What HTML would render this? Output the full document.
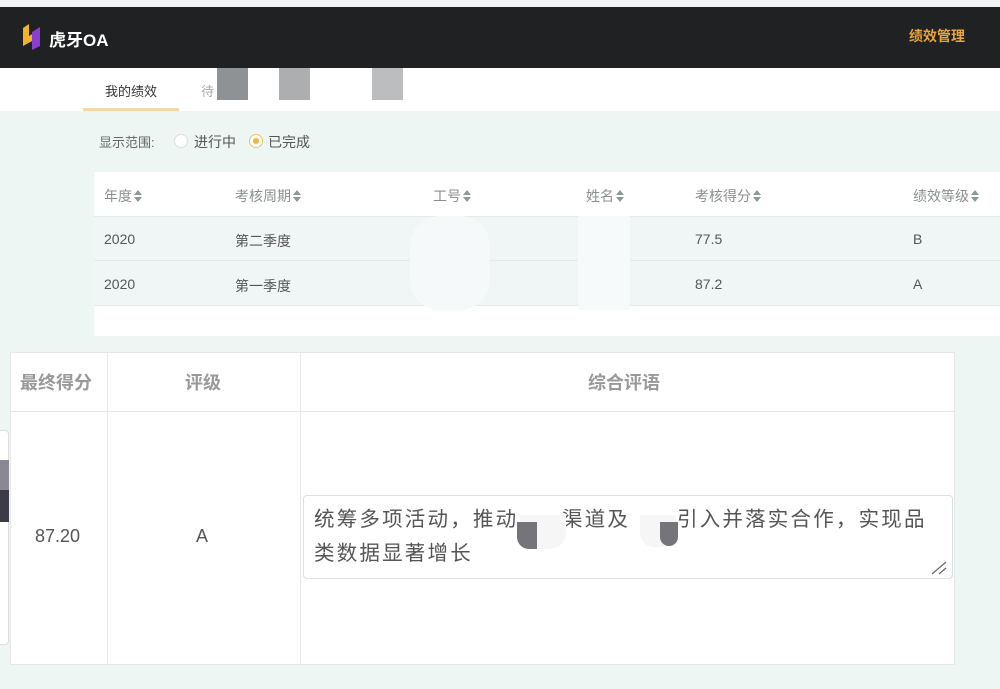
<!DOCTYPE html><html><head><meta charset="utf-8"><style>
*{margin:0;padding:0;box-sizing:border-box}
body{width:1000px;height:689px;overflow:hidden;background:#eef6f4;font-family:"Liberation Sans","Noto Sans CJK SC",sans-serif;position:relative;color:#555}
.abs{position:absolute}
.top{left:0;top:0;width:1000px;height:7px;background:#f4f4f4}
.bar{left:0;top:7px;width:1000px;height:61px;background:#1f2122}
.tabs{left:0;top:68px;width:1000px;height:43px;background:#fff}
.t{font-size:13px;white-space:nowrap}
.th{font-size:14px;color:#8a9090}
.sort{display:inline-block;width:8px;height:12px;vertical-align:-1px;margin-left:2px}
.ta{font-size:20.5px;letter-spacing:2.2px;color:#555;white-space:nowrap;line-height:24px}
</style></head><body>
<div class="abs top"></div>
<div class="abs bar"></div>
<svg class="abs" style="left:22px;top:24px" width="24" height="26" viewBox="0 0 24 26"><path d="M1 4 L7 0 L7 12 L12 9 L12 16 L1 22Z" fill="#f0b429"/><path d="M10 8 L18 3 L18 22 L10 26Z" fill="#8a3fd1"/></svg>
<div class="abs t" style="left:49px;top:26px;color:#fff;font-size:17px;font-weight:bold">虎牙OA</div>
<div class="abs t" style="left:909px;top:26px;color:#e8a53a;font-size:14px;font-weight:bold">绩效管理</div>
<div class="abs tabs"></div>
<div class="abs t" style="left:105px;top:81px;color:#333">我的绩效</div>
<div class="abs t" style="left:201px;top:81px;color:#aaa">待</div>
<div class="abs" style="left:83px;top:108px;width:96px;height:3px;background:#f0d9a8"></div>
<div class="abs" style="left:217px;top:68px;width:31px;height:32px;background:#8f9295"></div>
<div class="abs" style="left:279px;top:68px;width:31px;height:32px;background:#acaeb0"></div>
<div class="abs" style="left:372px;top:68px;width:31px;height:32px;background:#bbbdbf"></div>
<div class="abs t" style="left:99px;top:132px;color:#666">显示范围:</div>
<div class="abs" style="left:174px;top:134px;width:14px;height:14px;border-radius:50%;border:1px solid #ddd;background:#fff"></div>
<div class="abs t" style="left:194px;top:132px;color:#555;font-size:14px">进行中</div>
<div class="abs" style="left:249px;top:134px;width:14px;height:14px;border-radius:50%;border:1px solid #f0c060;background:#fff"><div style="margin:3px;width:6px;height:6px;border-radius:50%;background:#f0b440"></div></div>
<div class="abs t" style="left:268px;top:132px;color:#555;font-size:14px">已完成</div>
<div class="abs" style="left:94px;top:172px;width:906px;height:45px;background:#fff;border-bottom:1px solid #e4ebea"></div>
<div class="abs" style="left:94px;top:217px;width:906px;height:44px;background:#f0f6f5;border-bottom:1px solid #e2e9e8"></div>
<div class="abs" style="left:94px;top:262px;width:906px;height:44px;background:#f0f6f5;border-bottom:1px solid #e2e9e8"></div>
<div class="abs" style="left:94px;top:306px;width:906px;height:30px;background:#fff"></div>
<div class="abs" style="left:578px;top:216px;width:52px;height:94px;background:#f7fafa"></div>
<div class="abs" style="left:410px;top:216px;width:80px;height:94px;background:#f5f9f9;border-radius:30px"></div>
<svg width="0" height="0" style="position:absolute"><defs><g id="s"><path d="M4 0 L8 5 L0 5Z M0 7 L8 7 L4 12Z" fill="#8a9a98"/></g></defs></svg>
<div class="abs th" style="left:104px;top:186px">年度<svg class="sort" viewBox="0 0 8 12"><use href="#s"/></svg></div>
<div class="abs th" style="left:235px;top:186px">考核周期<svg class="sort" viewBox="0 0 8 12"><use href="#s"/></svg></div>
<div class="abs th" style="left:433px;top:186px">工号<svg class="sort" viewBox="0 0 8 12"><use href="#s"/></svg></div>
<div class="abs th" style="left:586px;top:186px">姓名<svg class="sort" viewBox="0 0 8 12"><use href="#s"/></svg></div>
<div class="abs th" style="left:695px;top:186px">考核得分<svg class="sort" viewBox="0 0 8 12"><use href="#s"/></svg></div>
<div class="abs th" style="left:913px;top:186px">绩效等级<svg class="sort" viewBox="0 0 8 12"><use href="#s"/></svg></div>
<div class="abs t" style="left:104px;top:231px;font-size:14px">2020</div>
<div class="abs t" style="left:235px;top:231px;font-size:14px">第二季度</div>
<div class="abs t" style="left:695px;top:231px;font-size:14px">77.5</div>
<div class="abs t" style="left:913px;top:231px;font-size:14px">B</div>
<div class="abs t" style="left:104px;top:276px;font-size:14px">2020</div>
<div class="abs t" style="left:235px;top:276px;font-size:14px">第一季度</div>
<div class="abs t" style="left:695px;top:276px;font-size:14px">87.2</div>
<div class="abs t" style="left:913px;top:276px;font-size:14px">A</div>
<div class="abs" style="left:10px;top:352px;width:945px;height:313px;background:#fff;border:1px solid #e4e8e8"></div>
<div class="abs" style="left:10px;top:411px;width:945px;height:1px;background:#e4e8e8"></div>
<div class="abs" style="left:107px;top:352px;width:1px;height:313px;background:#e4e8e8"></div>
<div class="abs" style="left:300px;top:352px;width:1px;height:313px;background:#e4e8e8"></div>
<div class="abs" style="left:0;top:430px;width:9px;height:215px;border:1px solid #ddd;border-left:none;border-radius:0 4px 4px 0;background:#fff"></div>
<div class="abs" style="left:0;top:460px;width:9px;height:30px;background:#8a8892"></div>
<div class="abs" style="left:0;top:490px;width:9px;height:32px;background:#3c3c48"></div>
<div class="abs t" style="left:20px;top:369px;font-size:18px;color:#999;font-weight:bold">最终得分</div>
<div class="abs t" style="left:185px;top:369px;font-size:18px;color:#999;font-weight:bold">评级</div>
<div class="abs t" style="left:588px;top:369px;font-size:18px;color:#999;font-weight:bold">综合评语</div>
<div class="abs t" style="left:35px;top:526px;font-size:18px;color:#555">87.20</div>
<div class="abs t" style="left:196px;top:526px;font-size:18px;color:#555">A</div>
<div class="abs" style="left:303px;top:495px;width:650px;height:84px;border:1px solid #dcdfe3;border-radius:4px;background:#fff"></div>
<div class="abs ta" style="left:314px;top:508px">统筹多项活动，推动</div>
<div class="abs ta" style="left:562px;top:508px">渠道及</div>
<div class="abs ta" style="left:677px;top:508px">引入并落实合作，实现品</div>
<div class="abs ta" style="left:314px;top:542px">类数据显著增长</div>
<div class="abs" style="left:520px;top:515px;width:46px;height:34px;background:#f6f6f6;border-radius:0 0 16px 16px"></div>
<div class="abs" style="left:517px;top:522px;width:20px;height:27px;background:#74747a;border-radius:0 0 0 12px"></div>
<div class="abs" style="left:640px;top:515px;width:36px;height:32px;background:#f6f6f6;border-radius:0 0 14px 14px"></div>
<div class="abs" style="left:660px;top:522px;width:18px;height:24px;background:#74747a;border-radius:0 0 10px 10px"></div>
<svg class="abs" style="left:930px;top:560px" width="18" height="16"><path d="M2 14 L16 2 M9 14 L16 8" stroke="#666" stroke-width="1.2"/></svg>
</body></html>
